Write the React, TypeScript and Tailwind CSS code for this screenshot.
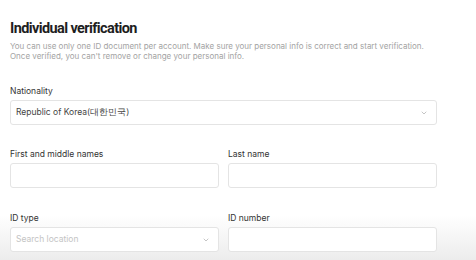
import { ChevronDown } from 'lucide-react'

function Label({ children }: { children: string }) {
    return <div className="mb-[4px] h-[10px] text-[8.5px] leading-[10px] text-[#333]">{children}</div>
}

function Select({ value, placeholder }: { value?: string; placeholder?: string }) {
    return (
        <div className="flex h-[25px] items-center justify-between rounded-[3px] border border-[#e4e4e4] bg-white pl-[5px] pr-[8px]">
            <span className={value ? 'text-[8.5px] text-[#444]' : 'text-[8.5px] text-[#c4c4c4]'}>
                {value ?? placeholder}
            </span>
            <ChevronDown className="h-[8px] w-[8px] text-[#a8a8a8]" strokeWidth={2} />
        </div>
    )
}

function Input() {
    return <div className="h-[25px] rounded-[3px] border border-[#e4e4e4] bg-white" />
}

export default function App() {
    return (
        <div className="h-[260px] w-[476px] overflow-hidden bg-[linear-gradient(to_bottom,#ffffff_0px,#ffffff_215px,#ececec_260px)] pl-[10px] font-['Inter',sans-serif]">
            <div className="w-[427px] pt-[19px]">
                <h1 className="font-['Roboto',sans-serif] text-[14.5px] font-bold leading-[20px] tracking-[-0.6px] text-[#1e1e1e]">
                    Individual verification
                </h1>
                <p className="mt-[2px] text-[8px] leading-[10px] text-[#a3a3a3]">
                    You can use only one ID document per account. Make sure your personal info is correct and start verification.
                    <br />
                    Once verified, you can't remove or change your personal info.
                </p>

                <div className="mt-[25px]">
                    <Label>Nationality</Label>
                    <Select value="Republic of Korea(대한민국)" />
                </div>

                <div className="mt-[24px] grid grid-cols-2 gap-x-[9px]">
                    <div>
                        <Label>First and middle names</Label>
                        <Input />
                    </div>
                    <div>
                        <Label>Last name</Label>
                        <Input />
                    </div>
                </div>

                <div className="mt-[25px] grid grid-cols-2 gap-x-[9px]">
                    <div>
                        <Label>ID type</Label>
                        <Select placeholder="Search location" />
                    </div>
                    <div>
                        <Label>ID number</Label>
                        <Input />
                    </div>
                </div>
            </div>
        </div>
    )
}
